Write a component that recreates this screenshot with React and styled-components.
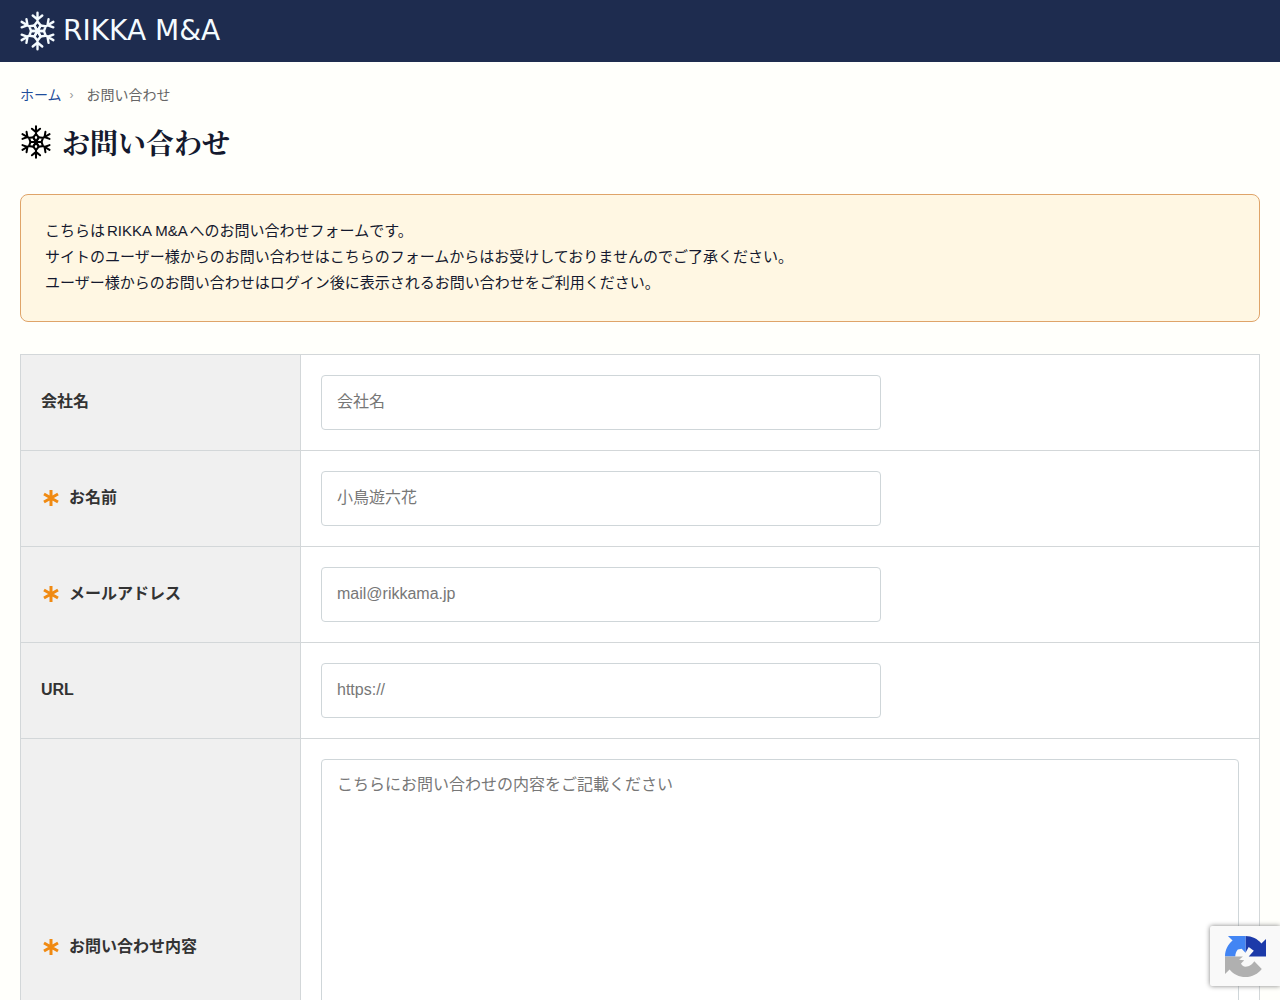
import React from "react";
import styled, { createGlobalStyle } from "styled-components";

const GlobalStyle = createGlobalStyle`
  *, *::before, *::after { box-sizing: border-box; }
  body {
    margin: 0;
    background: #fffffb;
    color: #333;
    font-family: "Liberation Sans", "Noto Sans CJK JP", sans-serif;
    font-size: 16px;
    line-height: 26px;
    text-autospace: normal;
  }
`;

const Header = styled.header`
  display: flex;
  align-items: center;
  height: 62px;
  padding: 0 20px;
  background: #1e2c4f;
`;

const Brand = styled.a`
  display: flex;
  align-items: center;
  gap: 8px;
  color: #f4fbff;
  font-family: "DejaVu Sans", sans-serif;
  font-size: 28px;
  font-weight: 400;
  line-height: 40px;
  text-decoration: none;
`;

const Main = styled.main`
  padding: 20px 20px 60px;
`;

const Crumbs = styled.nav`
  display: flex;
  align-items: center;
  font-size: 14px;
  color: #666;
`;

const CrumbLink = styled.a`
  color: #1f4e9c;
  text-decoration: none;
`;

const CrumbMark = styled.span`
  width: 25px;
  padding-left: 8px;
  font-size: 12px;
  color: #999;
`;

const Title = styled.h1`
  display: flex;
  align-items: center;
  gap: 10px;
  margin: 12px 0 30px;
  color: #14192e;
  font-family: "Noto Serif CJK JP", "Noto Serif JP", "Noto Sans CJK JP", serif;
  font-size: 28px;
  font-weight: 700;
  line-height: 44px;
`;

const Flake = styled.svg`
  display: block;
  flex: none;
  width: ${(p) => (p.$large ? 35 : 32)}px;
  height: ${(p) => (p.$large ? 40 : 34)}px;
  fill: none;
  stroke: ${(p) => (p.$large ? "#f4fbff" : "#000")};
  stroke-width: 6;
  stroke-linecap: round;
`;

const Notice = styled.p`
  margin: 0 0 32px;
  padding: 23px 24px 25px;
  border: 1px solid #dfa469;
  border-radius: 8px;
  background: #fff7e3;
  color: #14192e;
  font-size: 15px;
`;

const Form = styled.form`
  border: 1px solid #d3d7d9;
  border-bottom: 0;
  background: #fff;
`;

const Row = styled.div`
  display: grid;
  grid-template-columns: 280px minmax(0, 1fr);
  border-bottom: 1px solid #d3d7d9;
`;

const Label = styled.label`
  display: flex;
  align-items: center;
  gap: 8px;
  padding: 0 20px 2px;
  border-right: 1px solid #d3d7d9;
  background: #f0f0f0;
  font-weight: 700;
`;

const Asterisk = styled.svg`
  width: 20px;
  height: 20px;
  stroke: #f08a12;
  stroke-width: 3;
`;

const Cell = styled.div`
  display: flex;
  padding: 20px;
`;

const Input = styled.input`
  width: 100%;
  max-width: 560px;
  height: 55px;
  padding: 0 15px 2px;
  border: 1px solid #cfd6d9;
  border-radius: 4px;
  background: #fff;
  color: #333;
  font: inherit;
  &::placeholder { color: #777; opacity: 1; }
`;

const Textarea = styled(Input)`
  max-width: none;
  height: 377px;
  padding: 12px 15px;
  resize: vertical;
`;

const Recaptcha = styled.aside`
  position: fixed;
  right: 0;
  bottom: 14px;
  width: 70px;
  height: 60px;
  padding: 10px 15px;
  border-radius: 2px 0 0 2px;
  background: #f9f9f9;
  box-shadow: 0 0 5px #808080;
`;

function Snowflake({ large }) {
  return (
    <Flake $large={large} viewBox="-44 -50 88 100" aria-hidden="true">
      {[0, 60, 120, 180, 240, 300].map((angle) => (
        <g key={angle} transform={`rotate(${angle})`}>
          <path d="M0-23V-46M-12-39L0-29L12-39M0 0L8-14L0-24L-8-14Z" />
        </g>
      ))}
    </Flake>
  );
}

function Field({ id, label, required, multiline, ...rest }) {
  const Control = multiline ? Textarea : Input;
  return (
    <Row>
      <Label htmlFor={id}>
        {required && (
          <Asterisk viewBox="0 0 20 20" aria-hidden="true">
            <path d="M10 2V18M3 6L17 14M17 6L3 14" />
          </Asterisk>
        )}
        {label}
      </Label>
      <Cell>
        <Control
          as={multiline ? "textarea" : undefined}
          id={id}
          name={id}
          required={required}
          {...rest}
        />
      </Cell>
    </Row>
  );
}

export default function App() {
  return (
    <>
      <GlobalStyle />
      <Header>
        <Brand href="#">
          <Snowflake large />
          RIKKA M&amp;A
        </Brand>
      </Header>
      <Main>
        <Crumbs>
          <CrumbLink href="#">ホーム</CrumbLink>
          <CrumbMark>›</CrumbMark>
          <span>お問い合わせ</span>
        </Crumbs>
        <Title>
          <Snowflake />
          お問い合わせ
        </Title>
        <Notice>
          こちらはRIKKA M&amp;Aへのお問い合わせフォームです。
          <br />
          サイトのユーザー様からのお問い合わせはこちらのフォームからはお受けしておりませんのでご了承ください。
          <br />
          ユーザー様からのお問い合わせはログイン後に表示されるお問い合わせをご利用ください。
        </Notice>
        <Form>
          <Field id="company" label="会社名" placeholder="会社名" />
          <Field id="name" label="お名前" placeholder="小鳥遊六花" required />
          <Field id="email" type="email" label="メールアドレス" placeholder="mail@rikkama.jp" required />
          <Field id="url" type="url" label="URL" placeholder="https://" />
          <Field
            id="message"
            label="お問い合わせ内容"
            placeholder="こちらにお問い合わせの内容をご記載ください"
            required
            multiline
          />
        </Form>
      </Main>
      <Recaptcha>
        <svg width="41" height="41" viewBox="0 0 64 64" aria-hidden="true">
          <path fill="#1c3aa9" d="M64 32V4.7l-7.2 7.1C51 4.7 42 .1 32 .1V26l5-9 8 6-8 9z" />
          <path fill="#4285f4" d="M32 .1H4.6l7.2 7.1C4.6 13 0 22 0 32h16c0-4 1.400-8 4-11l6-1 6 6z" />
          <path fill="#b0b0b0" d="M0 32v27.300l7.200-7.100C13 59.400 22 64 32 64c10.400 0 19.600-5 25.400-12.600L45.700 39.500C43 44 38 48 32 48c-3 0-6-2-7-5l5-5-8-1 6-5z" />
        </svg>
      </Recaptcha>
    </>
  );
}
